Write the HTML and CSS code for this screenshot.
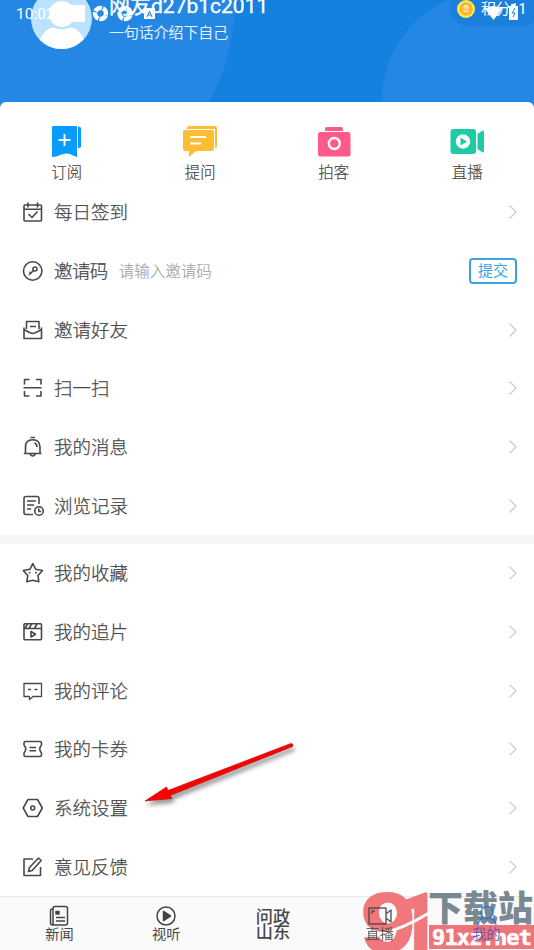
FILE: index.html
```html
<!DOCTYPE html>
<html lang="zh-CN">
<head>
<meta charset="utf-8">
<title>我的</title>
<link rel="stylesheet" href="styles.css">
</head>
<body>
<main class="app">
  <header class="hero">
    <svg class="hero-bg" viewBox="0 0 534 108"><circle cx="20" cy="0" r="215"/><circle cx="491" cy="100" r="109"/></svg>
    <svg class="avatar" viewBox="0 0 61 61"><defs><clipPath id="round"><circle cx="30.5" cy="30.5" r="30.5"/></clipPath></defs><g clip-path="url(#round)"><rect width="61" height="61" fill="#bbe2ff"/><circle cx="31" cy="26" r="13" fill="#fff"/><path d="M8 61V53Q14 40 22 39.500Q31 43 40 39.500Q48 40 54 53V61Z" fill="#fff"/></g></svg>
    <div class="profile"><div class="name">网友d27b1c2011</div><div class="bio">一句话介绍下自己</div></div>
    <div class="points"><svg class="coin" viewBox="0 0 18 18"><circle cx="9" cy="9" r="9" fill="#ffeb4e"/><circle cx="9" cy="9" r="6.8" fill="#ffb42d"/><path d="M6 7.2h6M5.8 9h6.4M6 11.4h6M7 5.6h4" stroke="#fff2b0" stroke-width="1.2"/></svg><span>积分11</span></div>
    <div class="status"><span class="clock">10:02</span>
      <svg class="status-icons" viewBox="0 0 534 28"><rect x="62" y="5" width="23" height="17" fill="#fff"/>
        <g fill="none" stroke="#fff" stroke-width="4.500"><circle cx="100.5" cy="13.5" r="5.5" stroke-dasharray="7.5 1.14" transform="rotate(20 100.5 13.5)"/><circle cx="125" cy="13.5" r="5.5" stroke-dasharray="7.5 1.14" transform="rotate(20 125 13.5)"/></g>
        <rect x="144" y="8" width="11" height="11" rx="1" fill="#fff"/><path d="M147 17l2.5-6 2.5 6M148 15h3" fill="none" stroke="#2387e3"/>
        <path d="M485 9Q493 3 502 9L493.5 20Z" fill="#fff"/><path d="M509 6h2V4h4v2h3v14h-9Z" fill="#fff"/><path d="M515 8l-3 5h3l-2 4" fill="none" stroke="#2387e3"/></svg>
    </div>
  </header>
  <section class="sheet">
    <nav class="actions">
      <div class="action"><svg viewBox="0 0 40 34"><path d="M6 3h23q1 0 1 1v30q-4.5-1.5-7-3-5-1.5-10 1-3 2-8 2V4q0-1 1-1" fill="#099cff"/><path d="M31 3.5q3 0 3 2V24l-3 1.5Z" fill="#099cff"/><path d="M11.5 17h12M17.500 11v12" stroke="#fff" stroke-width="1.8"/></svg><span>订阅</span></div>
      <div class="action"><svg viewBox="0 0 40 34"><path d="M7 5q0-2 2-2h26q2 0 2 2v18q0 2-2 2V7Q35 6 33 6H7Z" fill="#ffbe32"/><path d="M5 7h27q2 0 2 2v17q0 2-2 2H16l-7 6v-6H5q-2 0-2-2V9q0-2 2-2" fill="#ffbe32"/><path d="M33 6.500H34.500V26" fill="none" stroke="#fff" stroke-width="1"/><path d="M10 14h16M10 20.500h11" stroke="#fff" stroke-width="1.8"/></svg><span>提问</span></div>
      <div class="action"><svg viewBox="0 0 40 34"><path d="M11 8V6q0-2 2-2h14q2 0 2 2v2Z" fill="#ff5a8a"/><rect x="4" y="9" width="32.500" height="24.500" rx="2.500" fill="#ff5a8a"/><circle cx="20.300" cy="20.500" r="5.500" fill="none" stroke="#fff" stroke-width="2.400"/></svg><span>拍客</span></div>
      <div class="action"><svg viewBox="0 0 40 34"><rect x="3.500" y="6" width="25.500" height="25" rx="3" fill="#20caa7"/><circle cx="16" cy="18.500" r="7.200" fill="#fff"/><path d="M13.500 14.500l6.500 4-6.500 4Z" fill="#20caa7"/><path d="M30.500 11l5-3.500q1.500 0 1.500 1.500v19q0 1.500-1.500 1.500l-5-3.500Z" fill="#20caa7"/></svg><span>直播</span></div>
    </nav>
    <div class="list">
      <div class="row"><svg class="icon" viewBox="0 0 22 22"><rect x="2" y="4" width="17.500" height="16" rx="1"/><path d="M2 8.300h17.500M6 1.500v5M15.500 1.500v5M6.500 13l3.500 3.500 5.500-6"/></svg><span class="label">每日签到</span><svg class="chevron" viewBox="0 0 10 16"><path d="M1.500 1.500l6.500 6.500L1.500 14.500"/></svg></div>
      <div class="row"><svg class="icon" viewBox="0 0 22 22"><circle cx="10.700" cy="11" r="9.200"/><circle cx="13" cy="9" r="2"/><path d="M11.500 10.500L7 15M9 13l-1.500-1.200"/></svg><span class="label code">邀请码</span><span class="hint">请输入邀请码</span><button class="submit">提交</button></div>
      <div class="row"><svg class="icon" viewBox="0 0 22 22"><path d="M4.500 10V2.500h12.500V10M2 8.500v11h17.500v-11M2 10.500l5 2.700q3.700 2.500 7.500 0l5-2.700M8 7.500h6"/></svg><span class="label">邀请好友</span><svg class="chevron" viewBox="0 0 10 16"><path d="M1.500 1.500l6.500 6.500L1.500 14.500"/></svg></div>
      <div class="row"><svg class="icon" viewBox="0 0 22 22"><path d="M2.500 7.500v-5h5M14 2.500h5v5M2.500 14v5h5M14 19h5v-5M1.500 10.800h18"/></svg><span class="label">扫一扫</span><svg class="chevron" viewBox="0 0 10 16"><path d="M1.500 1.500l6.500 6.500L1.500 14.500"/></svg></div>
      <div class="row"><svg class="icon" viewBox="0 0 22 22"><path d="M1.800 17.500h17.700M3.500 17.500V11Q3.500 3.800 10.700 3.800T18 11v6.500M8.500 1.500h4.500M12.500 7q2.500 1 2.500 4M8 18q2.700 4 5.400 0"/></svg><span class="label">我的消息</span><svg class="chevron" viewBox="0 0 10 16"><path d="M1.500 1.500l6.500 6.500L1.500 14.500"/></svg></div>
      <div class="row"><svg class="icon" viewBox="0 0 22 22"><path d="M17 9V3.500q0-2-2-2H4q-2 0-2 2v14q0 2 2 2h7M5 6h9M5 10h7M5 14h4"/><circle cx="17" cy="16" r="4.300"/><path d="M16.800 13.500v3h2.400"/></svg><span class="label">浏览记录</span><svg class="chevron" viewBox="0 0 10 16"><path d="M1.500 1.500l6.500 6.500L1.500 14.500"/></svg></div>
    </div>
    <div class="divider"></div>
    <div class="list">
      <div class="row"><svg class="icon" viewBox="0 0 22 22"><path d="M10.800 1.500l3 5.800 6.700 1.200-4.500 5 .8 6.200-6-1.500-6 1.500 1-6.200-4.500-5 6.600-1.200ZM7.600 9.800v1.600M14 9.800v1.600"/></svg><span class="label">我的收藏</span><svg class="chevron" viewBox="0 0 10 16"><path d="M1.500 1.500l6.500 6.500L1.500 14.500"/></svg></div>
      <div class="row"><svg class="icon" viewBox="0 0 22 22"><rect x="2" y="2.800" width="17.500" height="16" rx="1"/><path d="M2 7.500h17.500M9.500 3L7 7.500M15 3l-2.500 4.500M5.500 3L3 7.500M9 10.500l4.500 2.700L9 16Z"/></svg><span class="label">我的追片</span><svg class="chevron" viewBox="0 0 10 16"><path d="M1.500 1.500l6.500 6.500L1.500 14.500"/></svg></div>
      <div class="row"><svg class="icon thin" viewBox="0 0 22 22"><path d="M2 3.500h17.500v13H11l-3.500 3v-3H2ZM6 9.500h3M12.500 9.500h3"/></svg><span class="label">我的评论</span><svg class="chevron" viewBox="0 0 10 16"><path d="M1.500 1.500l6.500 6.500L1.500 14.500"/></svg></div>
      <div class="row"><svg class="icon" viewBox="0 0 22 22"><path d="M3.500 3.500h14.500q1.500 0 1.500 1.500v2q-3.500 4 0 8v2q0 1.500-1.500 1.500H3.500Q2 18.500 2 17v-2q3.500-4 0-8V5q0-1.500 1.500-1.500M7.500 9.500H14M7.500 12.800H14"/></svg><span class="label">我的卡券</span><svg class="chevron" viewBox="0 0 10 16"><path d="M1.500 1.500l6.500 6.500L1.500 14.500"/></svg></div>
      <div class="row"><svg class="icon" viewBox="0 0 22 22"><path d="M6 2.500h9.500L20.300 11l-4.800 8.500H6L1.200 11Z"/><circle cx="10.700" cy="11" r="2"/></svg><span class="label">系统设置</span><svg class="chevron" viewBox="0 0 10 16"><path d="M1.500 1.500l6.500 6.500L1.500 14.500"/></svg></div>
      <div class="row"><svg class="icon" viewBox="0 0 22 22"><path d="M11 3H2v16.500h16.500V11M6.500 15.500l1-4L16.500 2l2.700 2.500-9 10Z"/></svg><span class="label">意见反馈</span><svg class="chevron" viewBox="0 0 10 16"><path d="M1.500 1.500l6.500 6.500L1.500 14.500"/></svg></div>
    </div>
  </section>
  <footer class="tabs">
    <div class="tab"><svg viewBox="0 0 22 22"><path d="M5 3.500Q5 1.500 7 1.500h10.500q2 0 2 2V18q0 2-2 2H5ZM5 4H4Q2.500 4 2.500 6v12q0 2 2.500 2M8 12.500h9M8 16h9"/><rect x="8" y="6.500" width="3" height="2.500" fill="#444"/></svg><span>新闻</span></div>
    <div class="tab"><svg viewBox="0 0 22 22"><circle cx="11" cy="11" r="9"/><path d="M8.500 6.500l7 4.500-7 4.500Z" fill="#444"/></svg><span>视听</span></div>
    <div class="tab brand"><span>问政</span><span>山东</span></div>
    <div class="tab live"><svg class="video" viewBox="0 0 26 22"><path d="M2 3h17v16H2ZM19 9l5-4v12l-5-4M5 9V6h3"/></svg><span>直播</span></div>
    <div class="tab current"><svg viewBox="0 0 22 22"><circle cx="11" cy="7.500" r="6"/><path d="M2 20q1-6 6-7M14 13q5 1 6 7"/></svg><span>我的</span></div>
  </footer>
  <svg class="arrow" viewBox="0 0 160 75"><path d="M151 5.500L28 52.500 26.500 49 5 63 32 60.500 30 57.500 152.500 8.500Q154 6 151 5.500Z" fill="#f00" stroke="#b01010" stroke-width=".7" stroke-linejoin="round"/></svg>
  <svg class="watermark" viewBox="0 0 174 60">
    <g class="mark"><text x="1" y="61" font-size="84" textLength="54" lengthAdjust="spacingAndGlyphs">9</text><text class="one" x="35" y="63" font-size="84" textLength="46" lengthAdjust="spacingAndGlyphs">1</text></g>
    <ellipse cx="28" cy="23" rx="9" ry="10.500" fill="#fafafa"/>
    <path class="slash" d="M15 46Q43 39 69 23"/>
    <rect x="69" y="35" width="105" height="24" fill="#ee747a"/>
    <text class="site-cn" x="68" y="31" textLength="105" lengthAdjust="spacingAndGlyphs">下载站</text>
    <text class="site-url" x="72" y="55" textLength="100" lengthAdjust="spacing">91xz.net</text>
  </svg>
</main>
</body>
</html>
```
FILE: styles.css
```css
* { box-sizing: border-box; }
body { margin: 0; background: #fff; color: #484848; font-family: Roboto, "Noto Sans CJK SC", sans-serif; }
svg { display: block; flex: none; }
.app { position: relative; width: 534px; height: 950px; overflow: hidden; display: flex; flex-direction: column; }
.hero { position: relative; height: 101.500px; flex: none; background: #1480e0; color: #fff; display: flex; }
.hero-bg { position: absolute; left: 0; top: 0; width: 534px; height: 108px; background: #1480e0; fill: #2387e3; }
.avatar { position: relative; width: 61px; height: 61px; margin: -12px 0 0 31px; }
.profile { position: relative; margin-left: 17px; white-space: nowrap; }
.name { margin-top: -8px; height: 28px; line-height: 28px; font-size: 21px; font-weight: 400; -webkit-text-stroke: .3px #fff; }
.bio { margin-top: 2px; font-size: 14.900px; line-height: 22px; font-weight: 300; -webkit-text-stroke: .2px #fff; }
.points { position: relative; display: flex; align-items: center; width: 90px; height: 36px; margin: -10px -6px 0 auto; padding: 4px 0 0 7px; border-radius: 18px; background: #1b7fdb; font-size: 15px; line-height: 20px; white-space: nowrap; }
.points span { margin-left: 6px; margin-top: -2px; letter-spacing: -.400px; }
.coin { width: 18px; height: 18px; margin-top: -2px; }
.status { position: absolute; left: 0; top: 0; width: 534px; height: 28px; }
.clock { position: absolute; left: 16px; top: 5px; font-size: 15.500px; line-height: 18px; }
.status-icons { position: absolute; left: 0; top: 0; width: 534px; height: 28px; }
.sheet { position: relative; flex: 1; background: #fff; border-radius: 6px 6px 0 0; min-height: 0; }
.actions { display: grid; grid-template-columns: repeat(4, 1fr); height: 81.400px; padding-top: 21px; }
.action { display: flex; flex-direction: column; align-items: center; font-size: 15.400px; line-height: 22px; font-weight: 300; -webkit-text-stroke: .2px #484848; }
.action svg { width: 40px; height: 34px; }
.action span { margin-top: 5px; }
.row { display: flex; align-items: center; height: 58.700px; padding: 0 16px 0 22px; }
.icon { width: 22px; height: 22px; fill: none; stroke: #484848; stroke-width: 1.600; stroke-linejoin: round; }
.icon.thin { stroke-width: 1.300; }
.label { margin: 2px 0 0 10px; font-size: 18.500px; line-height: 28px; font-weight: 300; -webkit-text-stroke: .25px #484848; }
.code { letter-spacing: -.600px; }
.hint { margin-left: 11px; margin-top: -1px; color: #a3a3a3; font-size: 15.500px; font-weight: 300; -webkit-text-stroke: .15px #a3a3a3; }
.chevron { width: 10px; height: 16px; margin-left: auto; fill: none; stroke: #ccc; stroke-width: 1.300; }
.submit { width: 48px; height: 26px; margin: 0 1px 0 auto; padding: 0; border: 2px solid #38a4e4; border-radius: 4px; background: #fff; color: #38a4e4; font: 400 15px/22px Roboto, "Noto Sans CJK SC", sans-serif; }
.divider { height: 9px; background: #f5f5f5; }
.tabs { display: grid; grid-template-columns: repeat(5, 106.800px); flex: none; height: 54px; padding-left: 6px; border-top: 1px solid #e9e9e9; background: #fafafa; }
.tab { position: relative; z-index: 2; display: flex; flex-direction: column; align-items: center; padding-top: 8px; font-size: 14.200px; line-height: 18px; }
.tab svg { width: 22px; height: 22px; fill: none; stroke: #444; stroke-width: 1.500; stroke-linejoin: round; }
.tab .video { width: 26px; }
.tab span { margin-top: -2px; }
.tab.brand { padding-top: 13px; font-size: 17.200px; line-height: 14.500px; font-weight: 500; }
.tab.brand span { margin-top: 0; }
.live { opacity: .85; }
.current { color: #4b4fc0; opacity: .8; }
.tab.current svg { stroke: #1272de; }
.arrow { position: absolute; left: 140px; top: 738px; width: 160px; height: 75px; filter: drop-shadow(2px 4px 2px #0006); }
.watermark { position: absolute; z-index: 1; left: 360px; top: 890px; width: 174px; height: 60px; overflow: hidden; }
.mark { fill: #f0787c; stroke: #f0787c; stroke-width: 2; font-family: "Liberation Sans", sans-serif; font-weight: 700; }
.one { font-family: Roboto, sans-serif; }
.slash { fill: none; stroke: #fff; stroke-width: 3; }
.site-cn { fill: #7a8891; font: 900 35px "Noto Sans CJK SC", sans-serif; }
.site-url { fill: #fff; stroke: #fff; stroke-width: .5; font: 700 22px "DejaVu Sans Mono", monospace; }
```
